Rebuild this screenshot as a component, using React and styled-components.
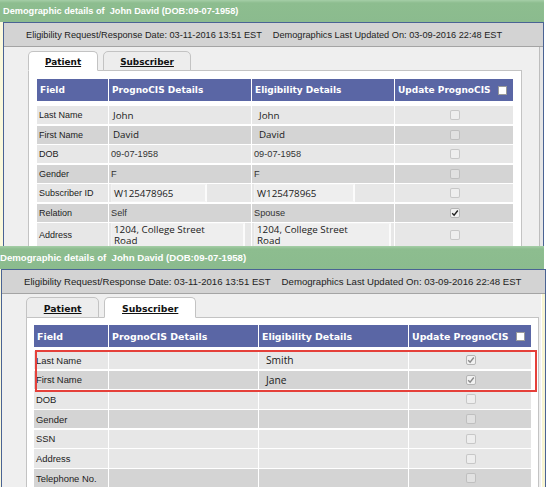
import React from "react";
import styled, { createGlobalStyle } from "styled-components";

const GlobalStyle = createGlobalStyle`
  *, *::before, *::after { box-sizing: border-box; }
  html, body { margin: 0; padding: 0; background: #fff; }
  body { font-family: "Liberation Sans", Arial, sans-serif; }
`;

const Page = styled.div`
  width: 549px;
  height: 487px;
  overflow: hidden;
  display: flex;
  flex-direction: column;
  background: #fff;
`;

const Screen = styled.section`
  --s: ${p => p.$s};
  --row-h: ${p => p.$rowH}px;
  flex: none;
  height: ${p => p.$h}px;
  width: calc(549px - ${p => p.$shift}px);
  margin-left: ${p => p.$shift}px;
  overflow: hidden;
  display: flex;
  flex-direction: column;
`;

const TitleBar = styled.div`
  flex: none;
  height: ${p => p.$h}px;
  margin-right: 5px;
  padding-left: ${p => p.$padL}px;
  display: flex;
  align-items: center;
  background: linear-gradient(#a5cea7 0, #8dbd8f 3px, #8bbb8e 100%);
  color: #fff;
  font-weight: bold;
  font-size: calc(var(--s) * 9.2px);
  white-space: pre;
`;

const Frame = styled.div`
  flex: 1;
  min-height: 0;
  display: flex;
`;

const Gutter = styled.div`
  flex: ${p => (p.$w ? "none" : "1")};
  width: ${p => (p.$w ? `${p.$w}px` : "auto")};
  background: ${p => p.$bg};
`;

const Window = styled.div`
  flex: none;
  width: ${p => p.$w}px;
  display: flex;
  flex-direction: column;
  border: 1px solid #4a6394;
  border-bottom: none;
  background: #efefef;
`;

const InfoBar = styled.div`
  flex: none;
  height: ${p => p.$h}px;
  padding-left: 22px;
  display: flex;
  align-items: center;
  gap: 11px;
  background: #d3d3d3;
  border-bottom: 1px solid #a4a4a4;
  color: #222;
  font-size: calc(var(--s) * 9.2px);
  white-space: nowrap;
`;

const Content = styled.div`
  flex: 1;
  min-height: 0;
  display: flex;
`;

const Main = styled.div`
  flex: 1;
  min-width: 0;
  padding: ${p => p.$padTop}px 0 0 24px;
  display: flex;
  flex-direction: column;
  align-items: flex-start;
`;

const Track = styled.div`
  flex: none;
  width: 4px;
  border-left: 1px solid ${p => p.$line};
  background: ${p => p.$bg};
`;

const Tabs = styled.div`
  display: flex;
  align-items: flex-end;
  gap: 5px;
  margin-bottom: -1px;
  position: relative;
  z-index: 1;
`;

const Tab = styled.div`
  height: ${p => p.$h}px;
  padding: 2px calc(var(--s) * 16px) 0;
  display: flex;
  align-items: center;
  border: 1px solid #c3c3c3;
  border-bottom-color: ${p => (p.$active ? "#fff" : "#c3c3c3")};
  border-radius: 5px 5px 0 0;
  background: ${p => (p.$active ? "#fff" : "#ededed")};
  color: #111;
  font-family: "DejaVu Sans", Verdana, sans-serif;
  font-weight: bold;
  font-size: calc(var(--s) * 8.9px);
  text-decoration: underline;
`;

const Panel = styled.div`
  flex: 1;
  padding: ${p => p.$padTop}px ${p => p.$padX}px 0;
  background: #fff;
  border: 1px solid #c3c3c3;
`;

const Table = styled.div`
  position: relative;
  display: flex;
  flex-direction: column;
  gap: 1.5px;
`;

const Row = styled.div`
  display: grid;
  grid-template-columns: ${p => p.$cols};
  column-gap: 1px;
  margin-bottom: ${p => p.$below || 0}px;
`;

const HeadCell = styled.div`
  height: 22px;
  padding-left: 3px;
  display: flex;
  align-items: center;
  gap: 7px;
  background: #5a66a5;
  color: #fff;
  font-family: "DejaVu Sans", Verdana, sans-serif;
  font-weight: bold;
  font-size: calc(var(--s) * 9px);
  white-space: nowrap;
`;

const HeadBox = styled.span`
  width: 9px;
  height: 9px;
  background: #fff;
  border: 1px solid #9a9a9a;
`;

const Cell = styled.div`
  min-height: var(--row-h);
  padding-left: 2px;
  display: flex;
  align-items: center;
  justify-content: ${p => (p.$center ? "center" : "flex-start")};
  background: ${p => (p.$shade === "dark" ? "#d4d4d4" : "#e7e7e7")};
`;

const Label = styled.span`
  color: #222;
  font-size: calc(var(--s) * 9px);
  white-space: nowrap;
`;

const PlainText = styled.span`
  color: #333;
  font-size: calc(var(--s) * 9.2px);
`;

const NameText = styled.span`
  margin-left: ${p => p.$indent}px;
  color: #1a1a1a;
  font-family: "Open Sans", "Liberation Sans", sans-serif;
  font-size: calc(var(--s) * 9.8px);
`;

const TextBox = styled.span`
  align-self: stretch;
  width: ${p => p.$w}px;
  padding: 0 2px;
  display: flex;
  align-items: center;
  background: #eeeeee;
  border: 1px solid #f2f2f2;
  border-right: 2px solid #fbfbfb;
  color: #1a1a1a;
  font-family: "Open Sans", "Liberation Sans", sans-serif;
  font-size: calc(var(--s) * 9.8px);
  line-height: 11px;
  white-space: pre-line;
`;

const Check = styled.span`
  width: 10px;
  height: 10px;
  display: inline-flex;
  align-items: center;
  justify-content: center;
  border: 1px solid ${p => (p.$on ? "#b5b5b5" : "rgba(150,150,150,0.45)")};
  border-radius: 2px;
  background: ${p => (p.$on ? "#f1f1f1" : "rgba(255,255,255,0.3)")};
`;

const Highlight = styled.div`
  position: absolute;
  left: ${p => p.$x}px;
  top: ${p => p.$y}px;
  width: ${p => p.$w}px;
  height: ${p => p.$h}px;
  border: 2px solid #e5403a;
  pointer-events: none;
`;

const Tick = ({ tone }) => (
  <svg width="8" height="8" viewBox="0 0 8 8">
    <path d="M1.2 4.3 L3.1 6.2 L6.8 1.5" fill="none" stroke={tone} strokeWidth="1.4" />
  </svg>
);

const Value = ({ v }) => {
  if (!v) return null;
  if (v.kind === "name") return <NameText $indent={v.indent}>{v.text}</NameText>;
  if (v.kind === "box") return <TextBox $w={v.w}>{v.text}</TextBox>;
  return <PlainText>{v.text}</PlainText>;
};

const name = (text, indent) => ({ kind: "name", text, indent });
const plain = text => ({ kind: "plain", text });
const box = (text, w) => ({ kind: "box", text, w });

const patientScreen = {
  scale: 1,
  height: 246,
  shift: 0,
  rowH: 18,
  titleH: 22,
  titlePad: 3,
  winW: 541,
  infoH: 24,
  mainPad: 3.5,
  tabH: 20,
  active: "Patient",
  panelTop: 8.5,
  panelX: 8,
  headBelow: 3.5,
  cols: "71px 142px 142px 118px",
  trackBg: "#e6e6e6",
  trackLine: "#bdbdbd",
  rows: [
    { label: "Last Name", shade: "light", prog: name("John", 2), elig: name("John", 5) },
    { label: "First Name", shade: "dark", prog: name("David", 2), elig: name("David", 5) },
    { label: "DOB", shade: "light", prog: plain("09-07-1958"), elig: plain("09-07-1958") },
    { label: "Gender", shade: "dark", prog: plain("F"), elig: plain("F") },
    { label: "Subscriber ID", shade: "light", prog: box("W125478965", 96), elig: box("W125478965", 101) },
    { label: "Relation", shade: "dark", prog: plain("Self"), elig: plain("Spouse"), check: "#222" },
    { label: "Address", shade: "light", prog: box("1204, College Street\nRoad", 134), elig: box("1204, College Street\nRoad", 137) },
  ],
};

const subscriberScreen = {
  scale: 1.045,
  height: 241,
  shift: -2,
  rowH: 18.2,
  titleH: 23,
  titlePad: 2,
  winW: 545,
  infoH: 24,
  mainPad: 3,
  tabH: 21,
  active: "Subscriber",
  panelTop: 7,
  panelX: 7,
  headBelow: 2.5,
  cols: "74px 149px 149px 122px",
  trackBg: "#f7f4d2",
  trackLine: "#fff",
  highlight: { x: 1, y: 25, w: 502, h: 42 },
  rows: [
    { label: "Last Name", shade: "light", elig: name("Smith", 5), check: "#8a8a8a" },
    { label: "First Name", shade: "dark", elig: name("Jane", 5), check: "#8a8a8a" },
    { label: "DOB", shade: "light" },
    { label: "Gender", shade: "dark" },
    { label: "SSN", shade: "light" },
    { label: "Address", shade: "light" },
    { label: "Telephone No.", shade: "dark" },
  ],
};

const DemographicScreen = ({ cfg }) => (
  <Screen $s={cfg.scale} $h={cfg.height} $shift={cfg.shift} $rowH={cfg.rowH}>
    <TitleBar $h={cfg.titleH} $padL={cfg.titlePad}>
      {"Demographic details of  John David (DOB:09-07-1958)"}
    </TitleBar>
    <Frame>
      <Gutter $w={3} $bg="#fbf9dc" />
      <Window $w={cfg.winW}>
        <InfoBar $h={cfg.infoH}>
          <span>Eligibility Request/Response Date: 03-11-2016 13:51 EST</span>
          <span>Demographics Last Updated On: 03-09-2016 22:48 EST</span>
        </InfoBar>
        <Content>
          <Main $padTop={cfg.mainPad}>
            <Tabs>
              {["Patient", "Subscriber"].map(t => (
                <Tab key={t} $h={cfg.tabH} $active={cfg.active === t}>{t}</Tab>
              ))}
            </Tabs>
            <Panel $padTop={cfg.panelTop} $padX={cfg.panelX}>
              <Table>
                <Row $cols={cfg.cols} $below={cfg.headBelow}>
                  <HeadCell>Field</HeadCell>
                  <HeadCell>PrognoCIS Details</HeadCell>
                  <HeadCell>Eligibility Details</HeadCell>
                  <HeadCell>Update PrognoCIS<HeadBox /></HeadCell>
                </Row>
                {cfg.rows.map(r => (
                  <Row key={r.label} $cols={cfg.cols}>
                    <Cell $shade={r.shade}><Label>{r.label}</Label></Cell>
                    <Cell $shade={r.shade}><Value v={r.prog} /></Cell>
                    <Cell $shade={r.shade}><Value v={r.elig} /></Cell>
                    <Cell $shade={r.shade} $center>
                      <Check $on={!!r.check}>{r.check && <Tick tone={r.check} />}</Check>
                    </Cell>
                  </Row>
                ))}
                {cfg.highlight && (
                  <Highlight $x={cfg.highlight.x} $y={cfg.highlight.y} $w={cfg.highlight.w} $h={cfg.highlight.h} />
                )}
              </Table>
            </Panel>
          </Main>
          <Track $bg={cfg.trackBg} $line={cfg.trackLine} />
        </Content>
      </Window>
      <Gutter $bg="#fff" />
    </Frame>
  </Screen>
);

export default function App() {
  return (
    <Page>
      <GlobalStyle />
      <DemographicScreen cfg={patientScreen} />
      <DemographicScreen cfg={subscriberScreen} />
    </Page>
  );
}
